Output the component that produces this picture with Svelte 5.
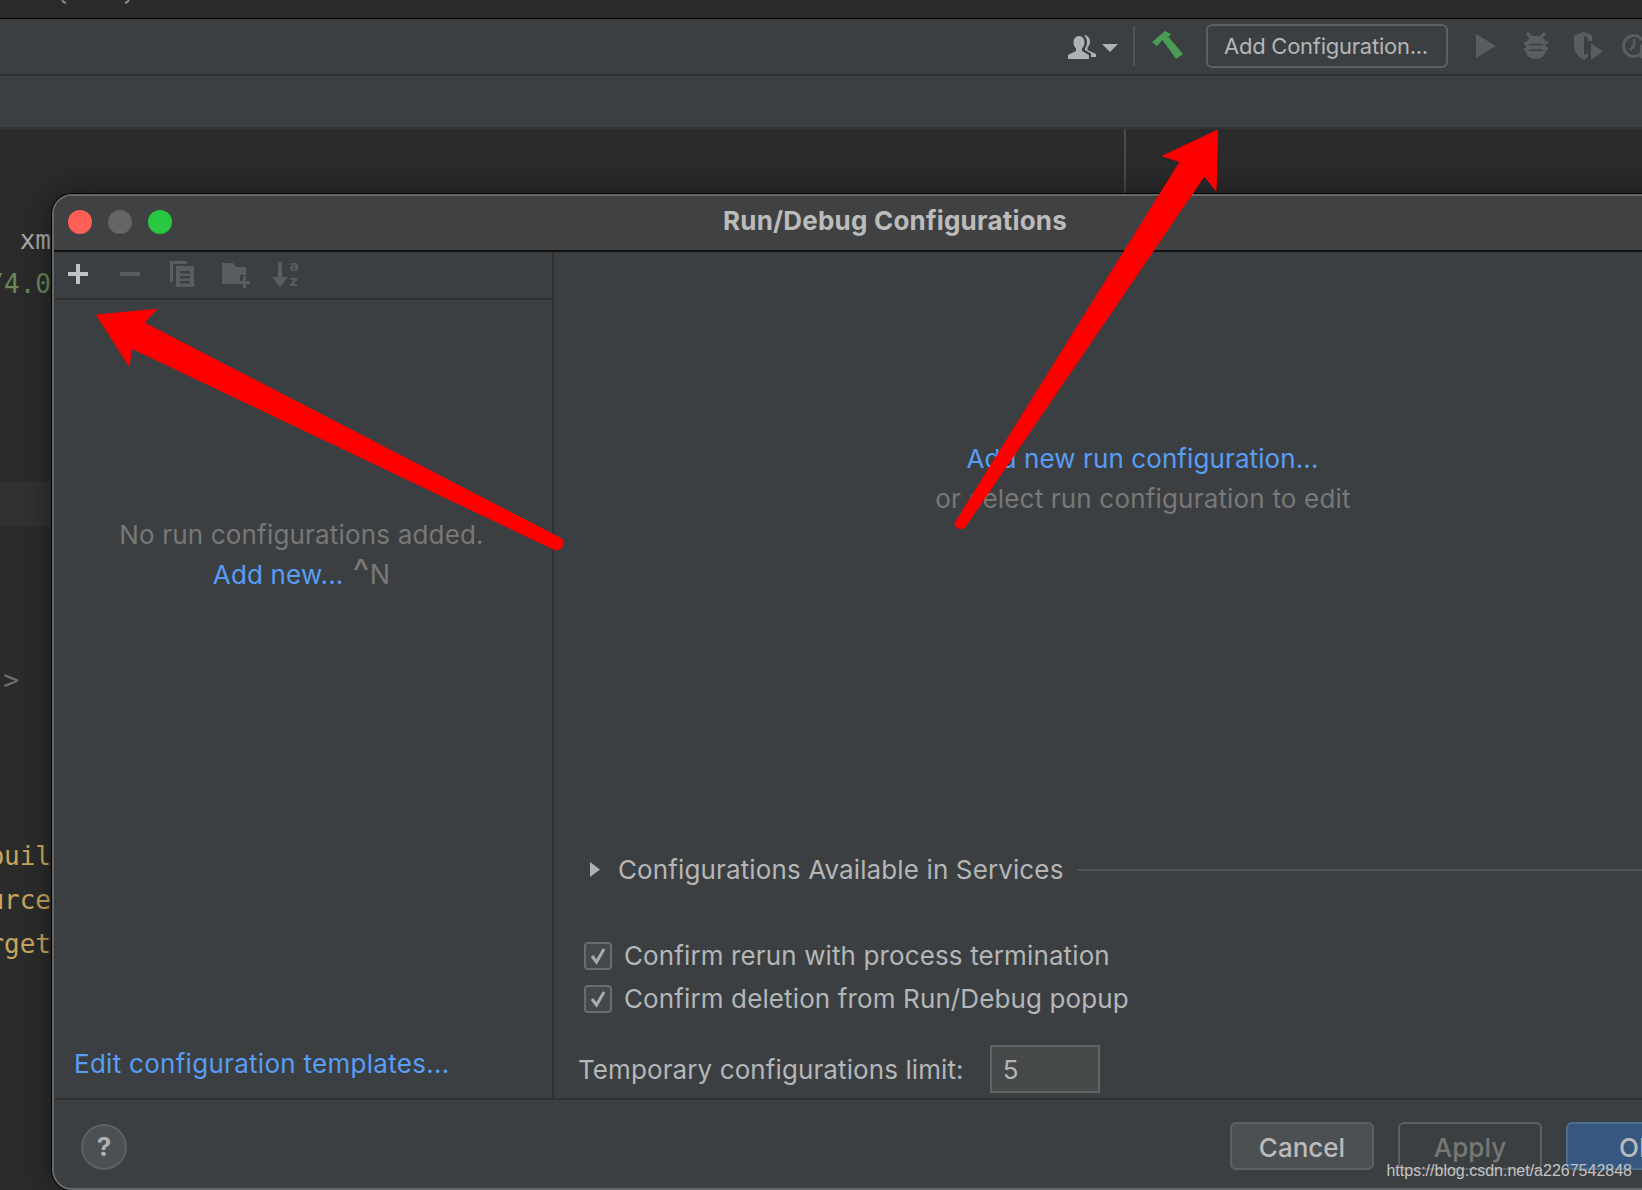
<script>
  const codeLines = [
    { text: 'xm', cls: 'plain' },
    { text: '/4.0', cls: 'ver' },
    { text: '', cls: '' }, { text: '', cls: '' }, { text: '', cls: '' }, { text: '', cls: '' },
    { text: '', cls: 'hl' },
    { text: '', cls: '' }, { text: '', cls: '' }, { text: '', cls: '' },
    { text: '-->', cls: 'dim' },
    { text: '', cls: '' }, { text: '', cls: '' }, { text: '', cls: '' },
    { text: 'buil', cls: 'tag' },
    { text: 'urce', cls: 'tag' },
    { text: 'rget', cls: 'tag' }
  ];
</script>

<div class="page">
  <div class="strip">
    <svg class="parens" width="70" height="4" viewBox="0 0 70 4"><path d="M1 0q1 2 4 3M64 3q3-1 4-3" fill="none" stroke="#8a8a8a" stroke-width="2"/></svg>
  </div>

  <div class="toolbar">
    <svg class="i-person" width="28" height="24" viewBox="0 0 28 24"><path fill="#afb1b3" d="M11 1C7.500 1 5.500 4 5.500 7.500c0 2.500 1 4.500 2.500 6V16L0 20v4h21v-4l-7-4v-2.500c1.500-1.500 2.500-3.500 2.500-6C16.500 4 14.500 1 11 1z"/><path fill="#afb1b3" d="M16 0c3.500 0 6 3 6 6.500 0 2.500-1 4.500-2.500 6V15l8.500 4v3h-5v-3.500l-6-3.500v-2c1.500-1.500 2-4 2-6S18 2 16 0z"/></svg>
    <svg class="i-caret" width="16" height="8" viewBox="0 0 16 8"><path fill="#afb1b3" d="M0 0h16L8 8z"/></svg>
    <span class="tsep"></span>
    <svg class="i-hammer" width="31" height="28" viewBox="0 0 31 28"><path fill="#499c54" d="M0 11 13 0l6 3-2.500 3L31 23l-7 5L10.500 9 5 15z"/></svg>
    <button class="cfg">Add Configuration...</button>
    <svg class="i-play" width="20" height="24" viewBox="0 0 20 24"><path fill="#5a5d5f" d="M0 0l20 12L0 24z"/></svg>
    <svg class="i-bug" width="24" height="28" viewBox="0 0 24 28"><path fill="#5a5d5f" d="M4 0l4.500 4h7L20 0l2 2-3.500 3.500c1.500 1 2.500 2 3 3.500H24v3h-2v3h2v3h-2v1.500c-1 4-5 7.500-10 7.500S3 24.500 2 20.500V19H0v-3h2v-3H0v-3h2.500c.5-1.500 1.500-2.500 3-3.500L2 2z"/><path fill="#3c3f41" d="M5 12h14v1.500H5zM5 17.500h14V19H5z"/></svg>
    <svg class="i-shield" width="29" height="28" viewBox="0 0 29 28"><path fill="#5a5d5f" d="M0 4l10-4 8 3v6h-4v-3l-4-2-6 3v4c0 5 3 9 7 12l3-2v4l-4 3c-6-3-10-8-10-15z"/><path fill="#5a5d5f" d="M0 4l10-4v24C4 20 0 15 0 9z"/><path fill="#5a5d5f" d="M17 11l12 8.500L17 28z"/></svg>
    <svg class="i-clock" width="30" height="26" viewBox="0 0 30 26"><circle cx="12" cy="13" r="10.500" fill="none" stroke="#5a5d5f" stroke-width="3"/><path stroke="#5a5d5f" stroke-width="2.500" fill="none" d="M12 6v7l-4 4"/><path fill="#5a5d5f" d="M18 11l12 8-12 7z"/></svg>
  </div>

  <div class="navbar"></div>

  <div class="editor">
    <div class="gutter">
      {#each codeLines as l}
        <div class="cl {l.cls}"><span>{l.text}</span></div>
      {/each}
    </div>
    <div class="vline"></div>
  </div>

  <div class="dialog">
    <div class="titlebar">
      <div class="lights">
        <span class="light l-close"></span>
        <span class="light l-min"></span>
        <span class="light l-max"></span>
      </div>
      <div class="title">Run/Debug Configurations</div>
      <div></div>
    </div>

    <div class="body">
      <div class="left">
        <div class="ltools">
          <svg class="t-plus" width="20" height="20" viewBox="0 0 20 20"><path fill="#c0c2c4" d="M8 0h4v8h8v4h-8v8H8v-8H0V8h8z"/></svg>
          <svg class="t-minus" width="20" height="4" viewBox="0 0 20 4"><path fill="#5a5d5f" d="M0 0h20v4H0z"/></svg>
          <svg class="t-copy" width="24" height="26" viewBox="0 0 24 26"><path fill="#5a5d5f" d="M0 0h17v3H3v18H0z"/><path fill="#5a5d5f" fill-rule="evenodd" d="M6 5h18v21H6zM10 10v2.500h10V10zm0 5v2.500h10V15zm0 5v2.500h10V20z"/></svg>
          <svg class="t-folder" width="28" height="25" viewBox="0 0 28 25"><path fill="#5a5d5f" d="M0 0h11l3 4h10v8h-6v9H0z"/><path fill="#5a5d5f" d="M21 13h3v5h4v3h-4v4h-3v-4h-4v-3h4z"/></svg>
          <svg class="t-sort" width="26" height="26" viewBox="0 0 26 26"><path fill="#5a5d5f" d="M6 0h4v15h6L8 25 0 15h6z"/><text x="17.500" y="9" class="sorta">a</text><text x="17.500" y="24" class="sorta">z</text></svg>
        </div>
        <div class="empty">
          <div class="msg muted">No run configurations added.</div>
          <div class="msg"><span class="link">Add new...</span><span class="shortcut"><span class="hat">^</span>N</span></div>
        </div>
        <div class="templates"><span class="link">Edit configuration templates...</span></div>
      </div>

      <div class="right">
        <div class="msg link">Add new run configuration...</div>
        <div class="msg muted">or select run configuration to edit</div>

        <div class="services">
          <svg class="tri" width="10" height="15" viewBox="0 0 10 15"><path fill="#afb1b3" d="M0 0l10 7.500L0 15z"/></svg>
          <span class="lbl">Configurations Available in Services</span>
          <span class="rule"></span>
        </div>

        <div class="checks">
          <label class="check">
            <span class="box"><svg width="20" height="20" viewBox="0 0 20 20"><path d="M4 10l4.500 6L16 3" fill="none" stroke="#a9abad" stroke-width="3"/></svg></span>
            <span class="lbl">Confirm rerun with process termination</span>
          </label>
          <label class="check">
            <span class="box"><svg width="20" height="20" viewBox="0 0 20 20"><path d="M4 10l4.500 6L16 3" fill="none" stroke="#a9abad" stroke-width="3"/></svg></span>
            <span class="lbl">Confirm deletion from Run/Debug popup</span>
          </label>
        </div>

        <div class="limit">
          <span class="lbl">Temporary configurations limit:</span>
          <span class="field">5</span>
        </div>
      </div>
    </div>

    <div class="footer">
      <span class="help">?</span>
      <div class="buttons">
        <button class="btn cancel">Cancel</button>
        <button class="btn apply">Apply</button>
        <button class="btn ok">OK</button>
      </div>
    </div>
  </div>

  <svg class="arrows" width="1642" height="1190" viewBox="0 0 1642 1190">
    <path fill="#fe0000" stroke="#fe0000" stroke-width="1" stroke-linejoin="round" d="M96.700 315 156.700 309.300 144 322.700 562 539q2 3 .5 7-2 4-7 4L131.700 348.300 129 366z"/>
    <path fill="#fe0000" stroke="#fe0000" stroke-width="1" stroke-linejoin="round" d="M1217.700 130 1216 190.700 1204.300 176 965 527q-3 3-7 1-4-2-3-5L1180 161.700 1162.700 156z"/>
  </svg>

  <div class="watermark">https://blog.csdn.net/a2267542848</div>
</div>

<style>
  :global(body) { margin: 0; background: #2b2b2b; }
  .page {
    position: relative;
    width: 1642px;
    height: 1190px;
    overflow: hidden;
    display: flex;
    flex-direction: column;
    font-family: Inter, "Liberation Sans", sans-serif;
    font-size: 26px;
    letter-spacing: 0.18px;
    color: #b4b6b8;
  }
  .strip {
    height: 18px;
    flex: none;
    background: #2b2a28;
    border-bottom: 1px solid #000;
  }
  .parens { display: block; margin-left: 61px; }
  .toolbar {
    flex: none;
    height: 55px;
    box-sizing: border-box;
    padding-bottom: 2px;
    background: #3c3f41;
    display: flex;
    align-items: center;
    justify-content: flex-end;
  }
  .i-person { margin-right: 6px; margin-top: 2px; }
  .i-caret { margin-right: 15px; margin-top: 4px; }
  .tsep { width: 2px; height: 40px; background: #515355; margin-right: 17px; }
  .i-hammer { margin-right: 23px; margin-top: -2px; }
  .cfg {
    width: 242px;
    height: 44px;
    box-sizing: border-box;
    background: #3c3f41;
    border: 2px solid #5e6060;
    border-radius: 6px;
    color: #b4b6b8;
    font: inherit;
    font-size: 22px;
    letter-spacing: -0.25px;
    padding: 0 2px 0 0;
    margin-right: 28px;
  }
  .i-play { margin-right: 28px; }
  .i-bug { margin-right: 26px; }
  .i-shield { margin-right: 19px; }
  .i-clock { margin-right: -10px; }
  .navbar {
    flex: none;
    height: 55px;
    box-sizing: border-box;
    background: #3c3f41;
    border-top: 2px solid #323232;
    border-bottom: 2px solid #323232;
  }
  .editor {
    flex: 1;
    background: #2b2b2b;
    display: flex;
    align-items: flex-start;
  }
  .gutter {
    width: 51px;
    flex: none;
    padding-top: 89px;
    overflow: hidden;
    font-family: "DejaVu Sans Mono", monospace;
    font-size: 26px;
    letter-spacing: 0;
  }
  .cl {
    height: 44px;
    line-height: 44px;
    display: flex;
    justify-content: flex-end;
    white-space: pre;
  }
  .cl.plain { color: #a9a9a9; }
  .cl.ver { color: #6a8759; }
  .cl.dim { color: #6e6e6e; padding-right: 32px; }
  .cl.tag { color: #c7a65d; }
  .cl.hl { background: #323232; }
  .vline { width: 2px; height: 64px; margin-left: 1073px; background: #4a4a4a; }

  .dialog {
    position: absolute;
    left: 52px;
    top: 194px;
    width: 1686px;
    height: 996px;
    box-sizing: border-box;
    border: 2px solid #666768;
    border-radius: 20px;
    box-shadow: 0 0 0 1px #000, 0 0 30px 4px rgba(0, 0, 0, 0.35);
    background: #3c3f41;
    display: flex;
    flex-direction: column;
    overflow: hidden;
  }
  .titlebar {
    flex: none;
    height: 52px;
    padding-bottom: 2px;
    background: #404142;
    border-bottom: 2px solid #111;
    display: grid;
    grid-template-columns: 1fr auto 1fr;
    align-items: center;
  }
  .lights { display: flex; gap: 16px; padding-left: 14px; }
  .light { width: 24px; height: 24px; border-radius: 50%; }
  .l-close { background: #ff5f57; }
  .l-min { background: #646665; }
  .l-max { background: #28c940; }
  .title { font-weight: 700; color: #bcbcbc; letter-spacing: 0.2px; margin-bottom: 4px; }
  .body { flex: 1; display: flex; min-height: 0; }
  .left {
    width: 498px;
    flex: none;
    border-right: 2px solid #323232;
    display: flex;
    flex-direction: column;
  }
  .ltools {
    flex: none;
    height: 46px;
    border-bottom: 2px solid #323232;
    display: flex;
    align-items: center;
  }
  .t-plus { margin-left: 14px; margin-right: 32px; margin-top: -2px; }
  .t-minus { margin-right: 30px; margin-top: -2px; }
  .t-copy { margin-right: 28px; margin-top: -2px; }
  .t-folder { margin-right: 22px; }
  .sorta { font-size: 14px; font-weight: 700; fill: #5a5d5f; font-family: "DejaVu Sans", sans-serif; letter-spacing: 0; }
  .empty { flex: 1; padding: 215px 3px 0 0; text-align: center; }
  .msg { height: 40px; line-height: 40px; text-align: center; }
  .muted { color: #787878; }
  .link { color: #589df6; }
  .shortcut { color: #787878; margin-left: 9px; font-size: 27px; }
  .hat { font-size: 36px; line-height: 20px; }
  .templates { height: 40px; line-height: 40px; padding: 0 0 14px 20px; letter-spacing: 0.28px; }
  .right {
    flex: 1;
    min-width: 0;
    display: flex;
    flex-direction: column;
    padding-top: 187px;
    box-sizing: border-box;
  }
  .right > .msg { padding-right: 5px; letter-spacing: 0.1px; }
  .right > .msg.muted { padding-right: 4px; letter-spacing: 0.18px; }
  .services {
    margin-top: 330px;
    height: 40px;
    display: flex;
    align-items: center;
    padding-left: 36px;
    letter-spacing: 0.12px;
  }
  .tri { margin-right: 18px; }
  .rule { flex: 1; height: 2px; background: #515355; margin: 2px 0 0 14px; }
  .checks { margin-top: 45px; padding-left: 30px; letter-spacing: 0.12px; }
  .check { height: 43px; display: flex; align-items: center; }
  .box {
    width: 28px;
    height: 28px;
    box-sizing: border-box;
    border: 2px solid #6b6b6b;
    border-radius: 4px;
    background: #43494a;
    display: flex;
    align-items: center;
    justify-content: center;
    margin-right: 12px;
  }
  .limit { margin-top: 25px; display: flex; align-items: center; padding-left: 24px; letter-spacing: 0.1px; }
  .field {
    width: 110px;
    height: 48px;
    line-height: 46px;
    box-sizing: border-box;
    border: 2px solid #646464;
    background: #45494a;
    padding-left: 11px;
    margin-left: 26px;
  }
  .footer {
    flex: none;
    height: 90px;
    box-sizing: border-box;
    border-top: 2px solid #323232;
    display: flex;
    justify-content: space-between;
    align-items: flex-start;
    padding: 22px 26px 0 27px;
  }
  .help {
    width: 46px;
    height: 46px;
    margin-top: 2px;
    box-sizing: border-box;
    border-radius: 50%;
    border: 2px solid #5e6060;
    background: #4c5052;
    text-align: center;
    line-height: 42px;
    font-weight: 700;
    color: #afb1b3;
  }
  .buttons { display: flex; gap: 24px; }
  .btn {
    width: 144px;
    height: 48px;
    box-sizing: border-box;
    border-radius: 6px;
    font: inherit;
    font-weight: 500;
    padding: 2px 0 0;
  }
  .cancel { background: #4c5052; border: 2px solid #5e6060; color: #bbbbbb; }
  .apply { background: transparent; border: 2px solid #5e6060; color: #777777; }
  .ok { background: #365880; border: 2px solid #4c708c; color: #bbbbbb; }
  .arrows { position: absolute; left: 0; top: 0; pointer-events: none; }
  .watermark {
    position: absolute;
    right: 10px;
    top: 1161px;
    font-family: "Liberation Sans", Arial, sans-serif;
    font-size: 16px;
    line-height: 20px;
    letter-spacing: 0;
    color: #c4c4c4;
  }
</style>
